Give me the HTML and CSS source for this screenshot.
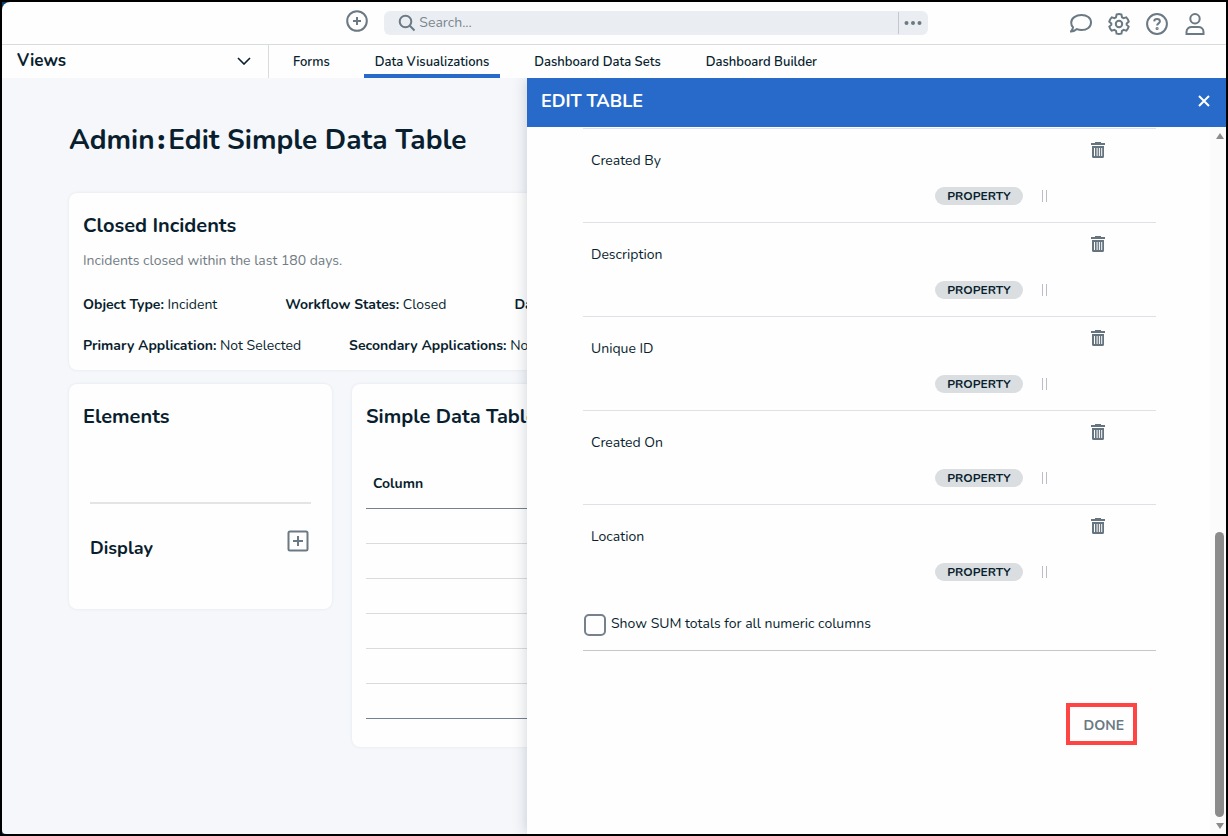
FILE: index.html
```
<!DOCTYPE html>
<html lang="en">
<head>
  <meta charset="UTF-8">
  <title>Admin: Edit Simple Data Table</title>
  <link rel="stylesheet" href="styles.css">
</head>
<body>
  <div class="app">
    <header class="topbar">
      <button class="icon-btn add" aria-label="Create">
        <svg width="22" height="22" viewBox="0 0 22 22"><circle cx="11" cy="11" r="9.8"/><path d="M11 7v8M7 11h8"/></svg>
      </button>
      <div class="search">
        <svg width="18" height="18" viewBox="0 0 18 18"><circle cx="7.5" cy="7.5" r="5.8"/><path d="M11.8 11.8l4.7 4.7"/></svg>
        <input type="text" placeholder="Search..." aria-label="Search">
        <button class="more" aria-label="More search options">
          <svg width="18" height="6" viewBox="0 0 18 6"><circle cx="2.5" cy="3" r="2"/><circle cx="9" cy="3" r="2"/><circle cx="15.5" cy="3" r="2"/></svg>
        </button>
      </div>
      <div class="tools">
        <button class="icon-btn" aria-label="Messages">
          <svg width="22" height="22" viewBox="0 0 22 22"><path d="M11.5 2C17 2 21 5 21 9.500S17 17 11.500 17c-1.700 0-3.200-.3-4.500-.9C5.500 17.500 3.400 18.500 1 18.500c1-1.200 1.800-2.700 2-4.200C1.800 13 1.200 11.400 1.200 9.700 1.200 5 6 2 11.500 2z"/></svg>
        </button>
        <button class="icon-btn" aria-label="Settings">
          <svg width="22" height="22" viewBox="0 0 22 22"><path d="M8.600 1.500Q11 .7 13.400 1.500L14 4.300L15.600 5.200L18.300 4.400Q20.100 6.200 20.700 8.600L18.700 10.500V11.900L20.700 13.600Q20.100 16 18.300 17.700L15.600 16.900L14 17.800L13.400 20.600Q11 21.300 8.600 20.600L8 17.800L6.400 16.900L3.700 17.700Q1.900 16 1.300 13.600L3.300 11.900V10.500L1.300 8.600Q1.900 6.200 3.700 4.400L6.400 5.200L8 4.300Z"/><circle cx="11" cy="11" r="3.200"/></svg>
        </button>
        <button class="icon-btn" aria-label="Help">
          <svg width="22" height="22" viewBox="0 0 22 22"><circle cx="11" cy="11" r="9.900"/><path d="M8.200 8.400c.1-1.500 1.200-2.300 2.800-2.300s2.900.9 2.900 2.400c0 1.800-2.800 2-2.800 4"/><circle cx="11.100" cy="15.500" r=".6"/></svg>
        </button>
        <button class="icon-btn" aria-label="Account">
          <svg width="22" height="22" viewBox="0 0 22 22"><circle cx="11" cy="5.700" r="4.700"/><path d="M2.500 21v-2c0-3.200 2.500-4.900 5.200-4.900h6.600c2.700 0 5.200 1.700 5.200 4.900v2z"/></svg>
        </button>
      </div>
    </header>

    <nav class="nav">
      <div class="views">
        <select aria-label="Views"><option>Views</option></select>
        <svg width="14" height="8" viewBox="0 0 14 8"><path d="M1 1l6 6 6-6"/></svg>
      </div>
      <a class="tab" href="#">Forms</a>
      <a class="tab active" href="#">Data Visualizations</a>
      <a class="tab" href="#">Dashboard Data Sets</a>
      <a class="tab" href="#">Dashboard Builder</a>
    </nav>

    <div class="stage">
      <main class="page">
        <h1>Admin<span class="colon">:</span>Edit Simple Data Table</h1>

        <section class="card summary">
          <h2>Closed Incidents</h2>
          <p class="desc">Incidents closed within the last 180 days.</p>
          <div class="facts first">
            <span><b>Object Type:</b> Incident</span>
            <span><b>Workflow States:</b> Closed</span>
            <span><b>Data Set:</b></span>
          </div>
          <div class="facts second">
            <span><b>Primary Application:</b> Not Selected</span>
            <span><b>Secondary Applications:</b> Not Selected</span>
          </div>
        </section>

        <div class="columns">
          <section class="card elements">
            <h2>Elements</h2>
            <div class="display">
              <h3>Display</h3>
              <button class="icon-btn" aria-label="Add display">
                <svg width="22" height="22" viewBox="0 0 22 22"><rect x="1.500" y="1.500" width="19" height="19" rx="1.500"/><path d="M11 6v10M6 11h10"/></svg>
              </button>
            </div>
          </section>
          <section class="card preview">
            <h2>Simple Data Table</h2>
            <table>
              <thead><tr><th>Column</th></tr></thead>
              <tbody>
                <tr><td></td></tr>
                <tr><td></td></tr>
                <tr><td></td></tr>
                <tr><td></td></tr>
                <tr><td></td></tr>
                <tr><td></td></tr>
              </tbody>
            </table>
          </section>
        </div>
      </main>

      <aside class="drawer">
        <div class="drawer-head">
          <h2>EDIT TABLE</h2>
          <button aria-label="Close">
            <svg width="12" height="12" viewBox="0 0 12 12"><path d="M1 1l10 10M11 1L1 11"/></svg>
          </button>
        </div>
        <div class="drawer-body">
          <div class="drawer-content">
            <ul class="fields" id="fields"></ul>
            <div class="totals">
              <input type="checkbox" id="sum">
              <label for="sum">Show SUM totals for all numeric columns</label>
            </div>
            <div class="actions">
              <div class="callout"><button class="done">DONE</button></div>
            </div>
          </div>
          <div class="scrollbar">
            <span class="arrow up"></span>
            <span class="thumb"></span>
            <span class="arrow down"></span>
          </div>
        </div>
      </aside>
    </div>
  </div>

  <script src="script.js"></script>
</body>
</html>
```
FILE: script.js
```
const fields = ['Created By', 'Description', 'Unique ID', 'Created On', 'Location'];

document.getElementById('fields').innerHTML = fields.map(name => `
  <li class="field">
    <div class="field-top">
      <span class="name">${name}</span>
      <button class="trash" aria-label="Remove ${name}">
        <svg width="14" height="16" viewBox="0 0 14 16">
          <path fill-rule="evenodd" d="M0 1h4V0h6v1h4v2H0zM1 4h12v10.500Q13 16 11.500 16h-9Q1 16 1 14.500zM3 6v8h1V6zM5.600 6v8h1V6zM7.900 6v8h1V6zM10.200 6v8h1V6z"/>
        </svg>
      </button>
    </div>
    <div class="field-bottom">
      <span class="pill">PROPERTY</span>
      <span class="drag"></span>
    </div>
  </li>`).join('');
```
FILE: styles.css
```
* { box-sizing: border-box; }

body {
  margin: 0;
  background: #0b3c66;
  color: #091e2e;
  font: 14px/20px Nunito, Lato, sans-serif;
}

h1, h2, h3, p, ul { margin: 0; padding: 0; }
h1, h2, h3, b, th { font-weight: 700; }
button, input, select { font: inherit; color: inherit; }
button { border: 0; padding: 0; background: none; cursor: pointer; }
svg { display: block; fill: none; stroke: #6b7983; stroke-width: 2; }

.app {
  height: 100vh;
  display: flex;
  flex-direction: column;
  border: 2px solid #000;
  overflow: hidden;
}

/* top bar */
.topbar {
  display: grid;
  grid-template-columns: 7fr 544px 5fr;
  align-items: center;
  gap: 16px;
  height: 43px;
  padding-right: 20px;
  border-bottom: 1px solid #d8dcdf;
  border-top-left-radius: 8px;
  background: #fefefe;
}
.add { justify-self: end; margin-bottom: 4px; }
.search {
  display: flex;
  align-items: center;
  height: 24px;
  padding-left: 14px;
  border-radius: 6px;
  background: #eaeef3;
}
.search input {
  flex: 1;
  min-width: 0;
  border: 0;
  padding: 0 3px;
  outline: 0;
  background: none;
}
.search input::placeholder { color: #7a868f; opacity: 1; }
.more {
  height: 22px;
  padding: 0 6px 0 5px;
  border-left: 1px solid #c2c8cd;
}
.more svg { fill: #6b7983; stroke: none; }
.tools { display: flex; justify-content: flex-end; gap: 16px; padding-top: 2px; }

/* navigation */
.nav {
  display: flex;
  height: 33px;
  background: #fefefe;
  font-size: 13px;
  font-weight: 600;
  white-space: nowrap;
}
.views {
  position: relative;
  width: 267px;
  border-right: 1px solid #d8dcdf;
}
.views select {
  width: 100%;
  height: 32px;
  padding: 0 15px;
  border: 0;
  appearance: none;
  background: none;
  font-size: 17px;
  font-weight: 700;
}
.views svg {
  position: absolute;
  top: 12px;
  right: 17px;
  stroke: #091e2e;
  stroke-width: 1.6;
  pointer-events: none;
}
.tab {
  margin-left: 23px;
  padding: 7px 11px 0;
  border-bottom: 4px solid transparent;
  color: inherit;
  text-decoration: none;
}
.tab:first-of-type { margin-left: 13px; }
.tab.active { border-color: #286ac9; }

/* page behind the drawer */
.stage {
  position: relative;
  flex: 1;
  min-height: 0;
  overflow: hidden;
  border-bottom-left-radius: 4px;
  background: #f5f7fb;
}
.page { padding: 44px 67px; }
h1 { font-size: 28px; line-height: 36px; }
.colon { padding: 0 3px; font-weight: 900; }
.card {
  padding: 19px 14px;
  border-radius: 8px;
  background: #fefefe;
  box-shadow: 0 0 3px #dfe4ea;
}
.card h2 { font-size: 20px; line-height: 28px; }
.summary { height: 177px; margin: 35px 0 14px; white-space: nowrap; }
.desc { margin-top: 11px; color: #727c84; }
.facts { display: flex; }
.first { gap: 68px; margin-top: 24px; }
.second { gap: 48px; margin-top: 21px; }
.columns {
  display: grid;
  grid-template-columns: 263px 1fr;
  align-items: start;
  gap: 20px;
}
.elements { height: 225px; }
.display {
  display: flex;
  justify-content: space-between;
  margin: 71px 7px 0;
  padding: 26px 2px 0 0;
  border-top: 2px solid #e2e4e5;
}
.display h3 { padding-top: 6px; font-size: 18px; line-height: 24px; }
.display .icon-btn { align-self: flex-start; }
.preview { height: 363px; }
.preview table {
  width: 100%;
  margin-top: 42px;
  border-collapse: collapse;
}
.preview th {
  height: 35px;
  padding: 1px 7px 13px;
  border-bottom: 1px solid #75818c;
  text-align: left;
}
.preview td { height: 35px; border-bottom: 1px solid #d8dcdf; }
.preview tr:last-child td { border-color: #75818c; }

/* drawer */
.drawer {
  position: absolute;
  top: 0;
  right: 0;
  bottom: 0;
  display: flex;
  flex-direction: column;
  width: 699px;
  background: #fefefe;
  box-shadow: 0 0 14px rgba(9, 30, 46, .2);
}
.drawer-head {
  display: flex;
  align-items: center;
  justify-content: space-between;
  height: 49px;
  padding: 0 16px 4px 14px;
  background: #286ac9;
  color: #fff;
}
.drawer-head h2 { font-size: 18px; }
.drawer-head svg { stroke: #fff; }
.drawer-body { display: flex; flex: 1; min-height: 0; }
.drawer-content { flex: 1; padding: 1px 54px 0 56px; }
.fields { list-style: none; }
.field {
  height: 94px;
  padding: 13px 51px 0 8px;
  border-top: 1px solid #dfe1e6;
}
.field-top { display: flex; justify-content: space-between; }
.name { padding-top: 9px; }
.trash { align-self: flex-start; }
.trash svg { fill: #66747f; stroke: none; }
.field-bottom {
  display: flex;
  align-items: center;
  justify-content: flex-end;
  gap: 19px;
  margin-top: 16px;
  padding-right: 58px;
}
.pill {
  width: 88px;
  border-radius: 9px;
  background: #dadee1;
  font-size: 12px;
  line-height: 18px;
  font-weight: 700;
  text-align: center;
}
.drag {
  width: 5px;
  height: 12px;
  border: solid #b9bec8;
  border-width: 0 1px;
}
.totals {
  display: flex;
  gap: 5px;
  height: 53px;
  padding: 16px 1px 0;
  border-bottom: 1px solid #c4c8cb;
}
.totals input {
  width: 22px;
  height: 22px;
  margin: 0;
  border: 2px solid #75818c;
  border-radius: 5px;
  appearance: none;
}
.actions { display: flex; justify-content: flex-end; padding: 52px 19px 0; }
.callout { border: 4px solid #ff4444; }
.done {
  height: 34px;
  padding: 4px 9px 0 14px;
  color: #6b7983;
  font-weight: 700;
}
.scrollbar {
  display: flex;
  flex-direction: column;
  align-items: center;
  gap: 6px;
  width: 16px;
  padding: 6px 1px 5px 4px;
  background: #fbfbfb;
}
.arrow { border: 4px solid transparent; }
.up { margin-bottom: auto; border-top: 0; border-bottom: 6px solid #8b8b8b; }
.down { border-bottom: 0; border-top: 6px solid #8b8b8b; }
.thumb { width: 9px; height: 41%; border-radius: 5px; background: #8b8b8b; }
```
